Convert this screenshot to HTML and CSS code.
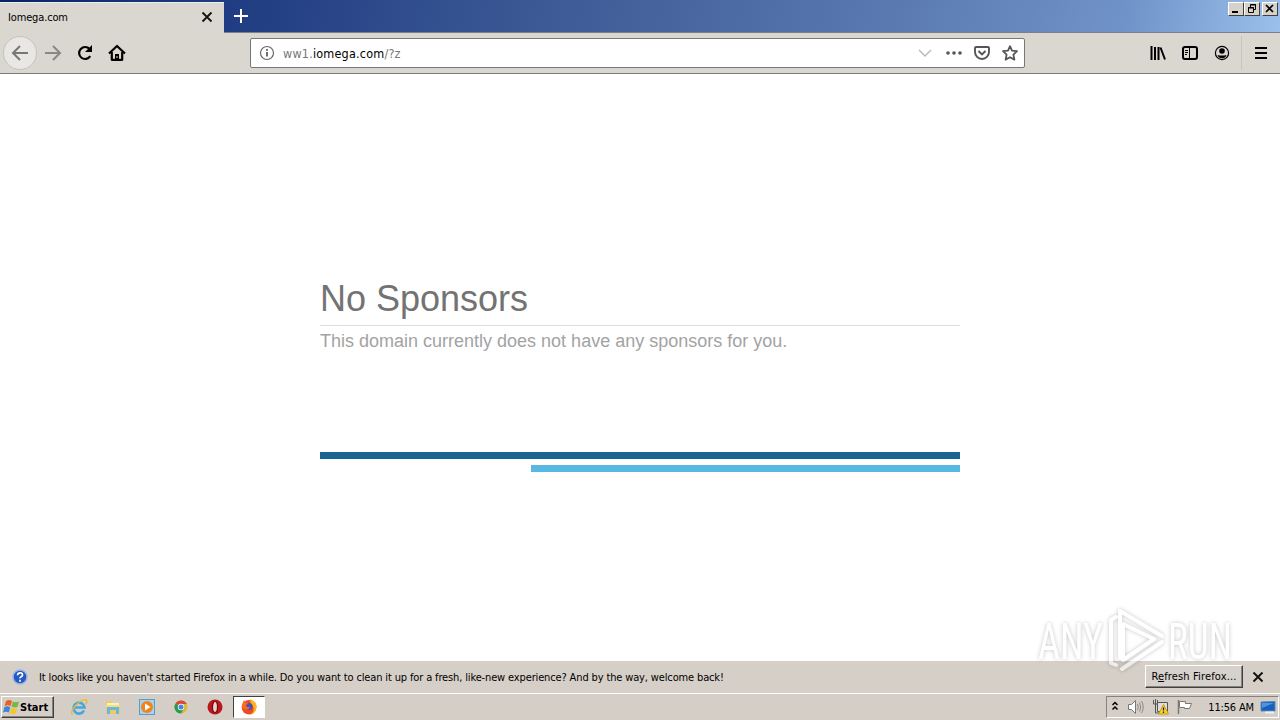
FILE: index.html
```html
<!DOCTYPE html>
<html lang="en">
<head>
    <meta charset="UTF-8">
    <meta name="viewport" content="width=device-width, initial-scale=1.0">
    <title>Iomega.com</title>
    <link rel="stylesheet" href="styles.css">
</head>
<body>
    <div class="titlebar">
        <div class="tab">
            <span class="tab-title">Iomega.com</span>
            <svg class="tab-close" width="12" height="12" viewBox="0 0 12 12"><path d="M1.5 1.5l9 9M10.5 1.5l-9 9" stroke="#111" stroke-width="1.8"/></svg>
        </div>
        <svg class="new-tab" width="14" height="14" viewBox="0 0 14 14"><path d="M7 0v14M0 7h14" stroke="#fff" stroke-width="2"/></svg>
        <div class="window-buttons">
            <div class="win-btn"><svg width="14" height="12" viewBox="0 0 14 12"><path d="M3 9h6" stroke="#000" stroke-width="2"/></svg></div>
            <div class="win-btn"><svg width="14" height="12" viewBox="0 0 14 12"><path d="M5.5 5V1.5h5v5H9M5 2h6M3.5 4.5h5v5h-5zM3 5h6" fill="none" stroke="#000"/></svg></div>
            <div class="win-btn close"><svg width="14" height="12" viewBox="0 0 14 12"><path d="M3 2l7 7M10 2L3 9" stroke="#000" stroke-width="1.7"/></svg></div>
        </div>
    </div>

    <div class="toolbar">
        <div class="nav">
            <div class="back"><svg width="18" height="18" viewBox="0 0 18 18"><path d="M17 9H2M9 2L2 9l7 7" fill="none" stroke="#777" stroke-width="2"/></svg></div>
            <svg width="18" height="18" viewBox="0 0 18 18"><path d="M1 9h15M9 2l7 7-7 7" fill="none" stroke="#888" stroke-width="2"/></svg>
            <svg width="18" height="18" viewBox="0 0 18 18"><path d="M14.2 12.2A6 6 0 1 1 13.6 5" fill="none" stroke="#000" stroke-width="2.2"/><path d="M16 1v7H9z"/></svg>
            <svg width="18" height="18" viewBox="0 0 18 18"><path d="M1 9.5L9 2l8 7.500M3.800 8v7.800h10.400V8" fill="none" stroke="#000" stroke-width="2.200" stroke-linejoin="round"/><path d="M7 16v-6h4v6z"/><path d="M9 12v2" stroke="#ddd"/></svg>
        </div>
        <div class="urlbar">
            <svg width="16" height="16" viewBox="0 0 16 16"><circle cx="8" cy="8" r="6.500" fill="none" stroke="#666" stroke-width="1.200"/><path d="M8 7v4.500M8 4v1.700" stroke="#555" stroke-width="1.700"/></svg>
            <span class="url"><span>ww1.</span><b>iomega.com</b><span>/?z</span></span>
            <div class="url-actions">
                <svg width="16" height="16" viewBox="0 0 16 16"><path d="M2 5l6 6 6-6" fill="none" stroke="#bbb" stroke-width="1.500"/></svg>
                <svg class="dots" width="16" height="16" viewBox="0 0 16 16"><g fill="#555"><circle cx="2" cy="8" r="1.800"/><circle cx="8" cy="8" r="1.800"/><circle cx="14" cy="8" r="1.800"/></g></svg>
                <svg width="16" height="16" viewBox="0 0 16 16"><path d="M2 2h12q1 0 1 1v4a7 7 0 0 1-14 0V3q0-1 1-1z" fill="none" stroke="#555" stroke-width="1.900"/><path d="M4.500 6L8 9.400 11.500 6" fill="none" stroke="#555" stroke-width="2"/></svg>
                <svg width="16" height="16" viewBox="0 0 16 16"><path d="M8 1.200l2 4.400 5 .600-3.600 3.400 1 5L8 12.200l-4.400 2.400 1-5L1 6.200l5-.600z" fill="none" stroke="#555" stroke-width="1.800" stroke-linejoin="round"/></svg>
            </div>
        </div>
        <div class="tools">
            <svg width="16" height="16" viewBox="0 0 16 16"><path d="M1.500 1v14M5 2v13M8.500 2v13M10.500 2.500L15 14.500" stroke="#000" stroke-width="2"/></svg>
            <svg width="16" height="16" viewBox="0 0 16 16"><rect x="1" y="2" width="14" height="12" rx="2" fill="none" stroke="#000" stroke-width="2"/><path d="M7.500 2v12" stroke="#000"/><path d="M3 5.500h3M3 7.500h3M3 9.500h2" stroke="#000"/></svg>
            <svg width="16" height="16" viewBox="0 0 16 16"><circle cx="8" cy="8" r="6.600" fill="none" stroke="#000" stroke-width="1.200"/><circle cx="8" cy="6" r="2.800"/><path d="M3.500 10q4.500 1 9 0-1 3.200-4.500 3.200T3.500 10z"/></svg>
            <div class="menu"><svg width="12" height="12" viewBox="0 0 12 12"><path d="M0 1h12M0 6h12M0 11h12" stroke="#000" stroke-width="2"/></svg></div>
        </div>
    </div>

    <main class="page">
        <div class="message">
            <h1>No Sponsors</h1>
            <p>This domain currently does not have any sponsors for you.</p>
            <div class="bar-dark"></div>
            <div class="bar-light"></div>
        </div>
    </main>

    <div class="notification">
        <svg width="16" height="16" viewBox="0 0 16 16"><circle cx="8" cy="8" r="7" fill="#2459c4" stroke="#9fb4dd" stroke-width="1.500"/><path d="M5.600 6.300q0-2.500 2.500-2.500t2.400 2.100q0 1.200-1.300 1.800T8 9.300M8 10.700v2" fill="none" stroke="#fff" stroke-width="1.700"/></svg>
        <span class="notification-text">It looks like you haven't started Firefox in a while. Do you want to clean it up for a fresh, like-new experience? And by the way, welcome back!</span>
        <div class="refresh"><span>R<u>e</u>fresh Firefox...</span></div>
        <svg class="dismiss" width="12" height="12" viewBox="0 0 12 12"><path d="M1.500 1.500l9 9M10.500 1.500l-9 9" stroke="#111" stroke-width="1.900"/></svg>
    </div>

    <div class="taskbar">
        <div class="start">
            <svg width="17" height="16" viewBox="0 0 17 16"><path d="M3 2q3-2 6 0L7.500 7.200q-3-1.700-6 0z" fill="#e8612c"/><path d="M9.800 2.500q3 1.500 6.200 0L14.500 8q-3 1.200-6-.500z" fill="#73b944"/><path d="M1.300 8.200q3-2 6 0L5.800 13.500q-3-1.700-5.800 0z" fill="#3b86d8"/><path d="M8.200 8.700q3 1.500 6 .200L12.700 14.500q-3 1-6-.500z" fill="#f5c52e"/></svg>
            <span>Start</span>
        </div>
        <div class="launchers">
            <svg width="18" height="18" viewBox="0 0 18 18"><path d="M14 12.500A5.500 5.500 0 1 1 14.500 9.500H5" fill="none" stroke="#42a9e0" stroke-width="2.600"/><path d="M2.500 16.500C-1 13 10 1 16 2q2 1-.500 4.500" fill="none" stroke="#e9b934" stroke-width="1.400"/></svg>
            <svg width="18" height="18" viewBox="0 0 18 18"><path d="M2 3h5l1 2h8v11H2z" fill="#edca64"/><path d="M3 5h12v4H3z" fill="#fff2b4"/><path d="M3 16V9h12v7h-3v-4H6v4z" fill="#63b9df"/><path d="M2 8h14" stroke="#f4db83" stroke-width="2"/></svg>
            <svg width="18" height="18" viewBox="0 0 18 18"><rect x="1.500" y="1.500" width="15" height="15" fill="#a9d2ef" stroke="#4f9fd3"/><circle cx="9" cy="9" r="6" fill="#ef8518"/><path d="M7 5.500L12.500 9 7 12.500z" fill="#fff"/></svg>
            <svg width="18" height="18" viewBox="0 0 18 18"><circle cx="9" cy="9" r="6.500" fill="#ddb92d"/><path d="M9 9L3.400 5.700A6.500 6.500 0 0 1 14.800 6H9z" fill="#dc4637"/><path d="M9 9L3.400 5.700A6.500 6.500 0 0 0 9 15.500L11.500 11z" fill="#259c55"/><circle cx="9" cy="9" r="3.200" fill="#fff"/><circle cx="9" cy="9" r="2.500" fill="#4285e8"/></svg>
            <svg width="18" height="18" viewBox="0 0 18 18"><circle cx="9" cy="9" r="7.500" fill="#ba171d"/><ellipse cx="9" cy="9" rx="2.500" ry="5.500" fill="#e9d6d3" stroke="#72090d" stroke-width="1.200"/></svg>
        </div>
        <div class="task-active">
            <svg width="18" height="18" viewBox="0 0 18 18"><circle cx="9" cy="9.300" r="7.300" fill="#ee4a23"/><path d="M10 1q8 3 6.500 9-1 6-7 6.600 5-2 4-7-.500-3-3-4.500z" fill="#ffb320"/><circle cx="9" cy="8.500" r="3.500" fill="#4951b4"/><path d="M1.700 9q.500-4 2.300-7 1 3 4 3.500-2 1-2 2.500 1 2 4 1-1 3-4 2.500-3-.500-4.300-2.500z" fill="#fb6a21"/></svg>
        </div>
        <div class="tray">
            <svg width="8" height="12" viewBox="0 0 8 12"><path d="M1.500 4L4 1.500 6.500 4M1.500 8.500L4 6l2.500 2.500" fill="none" stroke="#000" stroke-width="1.500"/></svg>
            <svg class="volume" width="18" height="16" viewBox="0 0 18 16"><path d="M1.500 5.500h3l4-4v13l-4-4h-3z" fill="#fff" stroke="#777"/><path d="M10.500 5q1.500 3 0 6M12.500 3.500q2.500 4.500 0 9M14.500 2q3.500 6 0 12" fill="none" stroke="#888"/></svg>
            <svg width="18" height="16" viewBox="0 0 18 16"><path d="M5.500 3.500h10v9h-10z" fill="#ddd" stroke="#555"/><path d="M1.500 1v4h4V1M3.500 0v14h4" fill="none" stroke="#555"/><path d="M11.500 5.500l5 9.500h-10z" fill="#f7d52a" stroke="#c79c12"/><path d="M11.500 8.500v3M11.500 12.500v1.500" stroke="#222" stroke-width="1.300"/></svg>
            <svg width="18" height="16" viewBox="0 0 18 16"><path d="M2.500 1v14" stroke="#777" stroke-width="1.500"/><path d="M3.500 2.500h6v2h6l-2 5h-5v-1h-5z" fill="#fff" stroke="#777"/></svg>
            <span class="clock">11:56 AM</span>
            <svg width="16" height="14" viewBox="0 0 16 14"><path d="M1 2l14-.500V11H1z" fill="#1860bd" stroke="#5b88b9"/><path d="M2 3h12L2 8z" fill="#4f94de"/><path d="M5 12.500h9" stroke="#eee" stroke-width="2"/></svg>
        </div>
    </div>

    <!-- translucent logo over the bottom right corner -->
    <svg class="watermark" width="240" height="78" viewBox="0 0 240 78">
        <g class="mark-text">
            <text x="8" y="56" textLength="65" lengthAdjust="spacingAndGlyphs">ANY</text>
            <text x="138" y="56" textLength="64" lengthAdjust="spacingAndGlyphs">RUN</text>
        </g>
        <g class="mark-lines">
            <path d="M93 21v36l31-21z"/>
            <path d="M86 14l-5 3v43l5 2M90 55V8l42 25M132 39L92 66"/>
        </g>
    </svg>
</body>
</html>
```
FILE: styles.css
```css
* {
    box-sizing: border-box;
}

body {
    margin: 0;
    width: 1280px;
    height: 720px;
    overflow: hidden;
    display: flex;
    flex-direction: column;
    background: #fff;
    color: #000;
    font-family: "DejaVu Sans Condensed", "DejaVu Sans", sans-serif;
    font-stretch: condensed;
    font-size: 11px;
    position: relative;
}

svg {
    display: block;
    flex-shrink: 0;
}

span {
    white-space: nowrap;
}

.titlebar {
    height: 33px;
    display: flex;
    align-items: flex-start;
    background: linear-gradient(100deg, #0a246a 0%, #203c82 18%, #3c5995 42%, #5674ad 66%, #7093c9 88%, #9bc0ea 100%);
    border-bottom: 1px solid #7c8089;
}

.tab {
    width: 224px;
    height: 31px;
    margin-top: 2px;
    padding: 0 11px 2px 8px;
    display: flex;
    align-items: center;
    justify-content: space-between;
    background: #dad6d0;
    border-top: 1px solid #eeeeea;
    margin-bottom: -1px;
}

.tab-title {
    letter-spacing: -0.15px;
}

.new-tab {
    margin: 9px 0 0 10px;
}

.window-buttons {
    display: flex;
    margin: 2px 2px 0 auto;
}

.win-btn {
    width: 16px;
    height: 14px;
    background: #d6d2ca;
    border: 1px solid;
    border-color: #fff #404040 #404040 #fff;
}

.win-btn.close {
    margin-left: 2px;
}

.toolbar {
    height: 41px;
    display: flex;
    align-items: center;
    background: #dad6d0;
    border-bottom: 1px solid #7c7c7c;
}

.nav {
    display: flex;
    align-items: center;
    gap: 14px;
    width: 250px;
    padding-left: 3px;
}

.back {
    width: 34px;
    height: 34px;
    margin-right: -7px;
    border: 1px solid #c6c3be;
    border-radius: 50%;
    background: #e9e7e3;
    display: flex;
    align-items: center;
    justify-content: center;
}

.urlbar {
    width: 775px;
    height: 30px;
    background: #fff;
    border: 1px solid #777;
    border-radius: 2px;
    display: flex;
    align-items: center;
    padding: 0 6px 0 8px;
}

.url {
    margin-left: 8px;
    font-size: 12.5px;
    letter-spacing: 0.2px;
    color: #777;
}

.url b {
    font-weight: normal;
    color: #000;
}

.url-actions {
    display: flex;
    gap: 12px;
    margin-left: auto;
}

.url-actions .dots {
    margin-left: 1px;
}

.tools {
    display: flex;
    align-items: center;
    gap: 16px;
    margin-left: auto;
}

.menu {
    height: 34px;
    width: 39px;
    margin-left: -5px;
    padding-left: 13px;
    border-left: 1px solid #c7c3bd;
    display: flex;
    align-items: center;
}

.page {
    height: 587px;
    padding-top: 204px;
    background: #fff;
}

.message {
    width: 640px;
    margin: 0 auto;
    font-family: "Liberation Sans", Arial, sans-serif;
}

.message h1 {
    margin: 0;
    height: 48px;
    line-height: 42px;
    font-size: 36px;
    font-weight: normal;
    color: #737373;
    border-bottom: 1px solid #ddd;
}

.message p {
    margin: 4px 0 0;
    height: 122px;
    line-height: 22px;
    font-size: 18px;
    color: #a3a3a3;
}

.bar-dark {
    height: 7px;
    background: #186594;
}

.bar-light {
    width: 429px;
    height: 7px;
    margin: 6px 0 0 auto;
    background: #57b8e3;
}

.notification {
    height: 32px;
    background: #d5cfc8;
    display: flex;
    align-items: center;
    padding: 0 16px 0 12px;
}

.notification-text {
    margin-left: 11px;
    letter-spacing: -0.14px;
}

.refresh {
    width: 98px;
    height: 23px;
    margin: 0 9px 2px auto;
    background: #d6d1ca;
    border: 1px solid;
    border-color: #fff #404040 #404040 #fff;
    box-shadow: inset -1px -1px #87827b;
    display: flex;
    align-items: center;
    justify-content: center;
    letter-spacing: 0.15px;
}

.taskbar {
    height: 27px;
    background: #d5cec7;
    border-top: 1px solid #fff;
    box-shadow: 0 -1px #d5cfc8;
    display: flex;
    align-items: center;
    padding: 0 1px;
}

.start {
    width: 53px;
    height: 22px;
    border: 1px solid;
    border-color: #fff #404040 #404040 #fff;
    box-shadow: inset -1px -1px #87827b;
    display: flex;
    align-items: center;
    padding-left: 1px;
    font-weight: bold;
}

.launchers {
    display: flex;
    gap: 16px;
    margin-left: 16px;
}

.task-active {
    width: 32px;
    height: 22px;
    margin-left: 9px;
    background: #fff;
    border: 1px solid;
    border-color: #404040 #fff #fff #404040;
    display: flex;
    align-items: center;
    justify-content: center;
}

.tray {
    width: 173px;
    height: 22px;
    margin-left: auto;
    padding: 0 2px 0 4px;
    border: 1px solid;
    border-color: #87827b #fff #fff #87827b;
    display: flex;
    align-items: center;
    gap: 6px;
}

.volume {
    margin: 0 1px 0 2px;
}

.clock {
    margin-left: auto;
    letter-spacing: -0.15px;
}

.watermark {
    position: absolute;
    left: 1030px;
    top: 603px;
    opacity: 0.6;
    filter: drop-shadow(0 0 2px rgba(0, 0, 0, 0.38));
}

.mark-text {
    font-family: Roboto, sans-serif;
    font-size: 50px;
    fill: #fff;
}

.mark-lines {
    fill: none;
    stroke: #fff;
    stroke-width: 4px;
    stroke-linejoin: round;
    stroke-linecap: round;
}
```
